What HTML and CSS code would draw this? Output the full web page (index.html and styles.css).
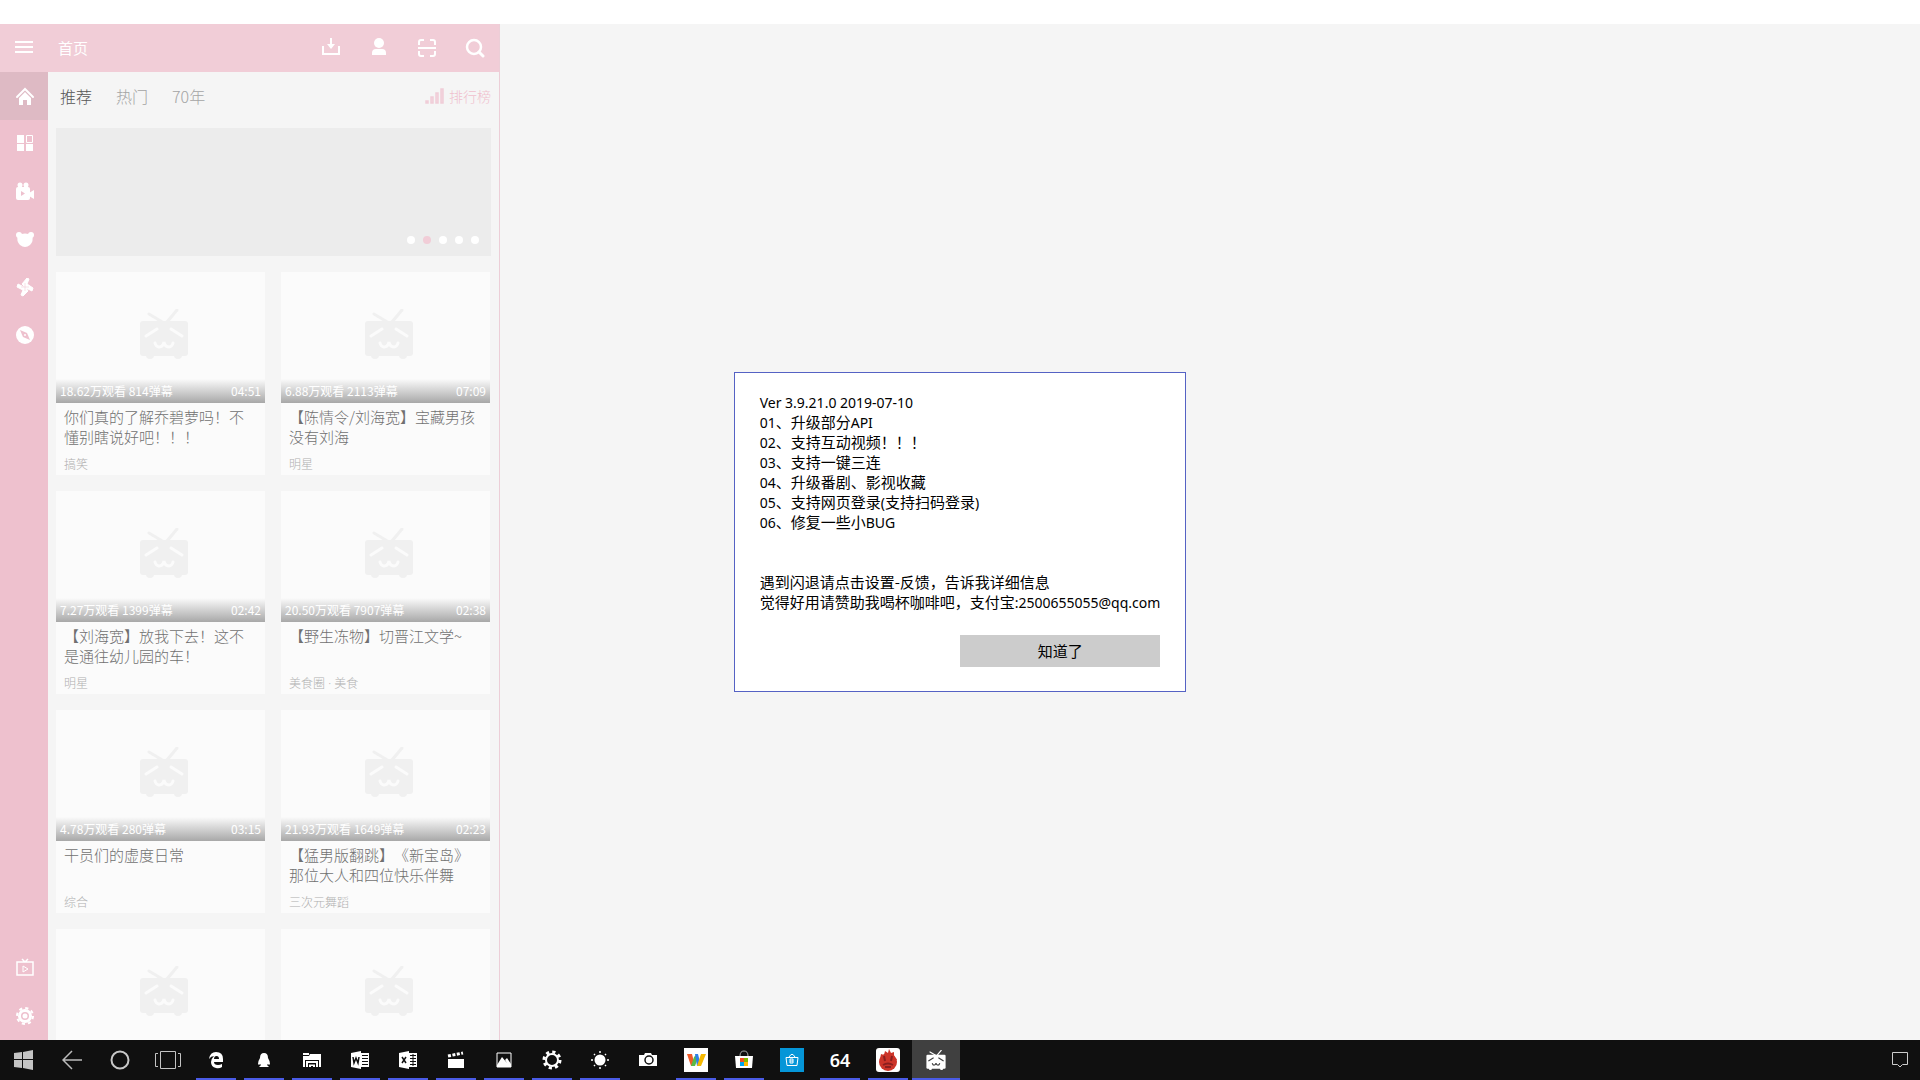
FILE: index.html
```html
<!DOCTYPE html>
<html lang="zh-CN">
<head>
  <meta charset="UTF-8">
  <meta name="viewport" content="width=device-width, initial-scale=1.0">

  <title>首页</title>

  <link rel="stylesheet" href="styles.css">
</head>
<body>

  <!-- shared icons -->
  <svg class="symbols" aria-hidden="true">
    <symbol id="tv" viewBox="0 0 50 50">
      <path d="M10 5 L25 14 M38 1 L28 13" fill="none" stroke="currentColor" stroke-width="3" stroke-linecap="round"/>
      <rect x="1" y="12" width="48" height="35" rx="3" fill="currentColor"/>
      <circle cx="11" cy="46" r="4" fill="currentColor"/>
      <circle cx="39" cy="46" r="4" fill="currentColor"/>
      <path class="tvFace" d="M7 27 L18 20 M32 20 L43 27 M16 34 Q17 38 20 38 Q24 38 25 33 Q26 38 30 38 Q33 38 34 34" fill="none" stroke-width="3" stroke-linecap="round"/>
    </symbol>
  </svg>

  <div class="titleBar"></div>

  <div class="app">
    <div class="panel">
      <header class="header">
        <button class="iconButton menuButton" aria-label="菜单">
          <svg width="18" height="18" viewBox="0 0 18 18"><path d="M0 3H18M0 8H18M0 13H18" fill="none" stroke="#fff" stroke-width="2"/></svg>
        </button>
        <h1 class="headerTitle">首页</h1>
        <button class="iconButton" aria-label="下载">
          <svg width="20" height="20" viewBox="0 0 20 20"><path d="M2 8V16H18V8" fill="none" stroke="#fff" stroke-width="2"/><path d="M10 0V9" stroke="#fff" stroke-width="2"/><path d="M6 6H14L10 11Z" fill="#fff"/></svg>
        </button>
        <button class="iconButton" aria-label="用户">
          <svg width="20" height="20" viewBox="0 0 20 20"><circle cx="10" cy="5" r="5" fill="#fff"/><path d="M3 17V15Q3 11 7 11H13Q17 11 17 15V17Z" fill="#fff"/></svg>
        </button>
        <button class="iconButton" aria-label="扫码">
          <svg width="20" height="20" viewBox="0 0 20 20"><path d="M2 7V4Q2 2 4 2H7M13 2H16Q18 2 18 4V7M2 13V16Q2 18 4 18H7M13 18H16Q18 18 18 16V13M1 10H19" fill="none" stroke="#fff" stroke-width="2"/></svg>
        </button>
        <button class="iconButton" aria-label="搜索">
          <svg width="20" height="20" viewBox="0 0 20 20"><circle cx="9" cy="9" r="7" fill="none" stroke="#fff" stroke-width="2.500"/><path d="M14 14L18 18" stroke="#fff" stroke-width="3" stroke-linecap="round"/></svg>
        </button>
      </header>

      <div class="panelBody">
        <nav class="sideBar">
          <a href="#" class="sideItem sideItem-active" aria-label="首页">
            <svg width="20" height="20" viewBox="0 0 20 20"><path d="M2 11L10 3L18 11" fill="none" stroke="#fff" stroke-width="2" stroke-linecap="round"/><path d="M4 12L10 6L16 12V19H12V14H8V19H4Z" fill="#fff"/></svg>
          </a>
          <a href="#" class="sideItem" aria-label="分区">
            <svg width="20" height="20" viewBox="0 0 20 20"><path d="M2 1H9V9H2ZM2 10H9V17H2ZM11 10H18V17H11Z" fill="#fff"/><path d="M11.500 1.500H17.500V8.500H11.500Z" fill="none" stroke="#fff"/></svg>
          </a>
          <a href="#" class="sideItem" aria-label="直播">
            <svg width="20" height="20" viewBox="0 0 20 20"><circle cx="5" cy="3" r="2.500" fill="#fff"/><circle cx="11" cy="3" r="2.500" fill="#fff"/><rect x="1" y="5" width="14" height="13" rx="2" fill="#fff"/><path d="M14 11L19 8V17L14 14Z" fill="#fff"/><path d="M6 9L10 11.500L6 14Z" fill="#eec1ce"/></svg>
          </a>
          <a href="#" class="sideItem" aria-label="番剧">
            <svg width="20" height="20" viewBox="0 0 20 20"><circle cx="4" cy="5" r="3" fill="#fff"/><circle cx="16" cy="5" r="3" fill="#fff"/><path d="M3 5Q10 2 17 5Q19 11 15 15Q10 19 5 15Q1 11 3 5Z" fill="#fff"/></svg>
          </a>
          <a href="#" class="sideItem" aria-label="动态">
            <svg width="20" height="20" viewBox="0 0 20 20"><path d="M10 9L7 6L12 0L14 1L12 6L18 10L17 13L11 10L13 13L8 18L6 17L8 12L2 9L3 6L9 9Z" fill="#fff" stroke="#fff"/><path d="M10 5V13M6 9H14" stroke="#eec1ce" stroke-width=".5"/></svg>
          </a>
          <a href="#" class="sideItem" aria-label="发现">
            <svg width="20" height="20" viewBox="0 0 20 20"><circle cx="10" cy="9" r="9" fill="#fff"/><path d="M5 4L12 7L15 14L8 11Z" fill="#eec1ce"/><circle cx="10" cy="9" r="1" fill="#fff"/></svg>
          </a>
          <a href="#" class="sideItem sideItem-bottom" aria-label="视频">
            <svg width="20" height="20" viewBox="0 0 20 20"><path d="M2 4H18V17H2ZM7 1L10 4L13 1" fill="none" stroke="#fff" stroke-width="1.500"/><path d="M8 8L13 11L8 14Z" fill="none" stroke="#fff"/></svg>
          </a>
          <a href="#" class="sideItem" aria-label="设置">
            <svg width="20" height="20" viewBox="0 0 20 20"><circle cx="10" cy="10" r="8" fill="none" stroke="#fff" stroke-width="2" stroke-dasharray="3.200 3.080"/><circle cx="10" cy="10" r="5.500" fill="none" stroke="#fff" stroke-width="3"/><circle cx="10" cy="10" r="2.500" fill="#fff"/></svg>
          </a>
        </nav>

        <main class="content">
          <div class="tabs">
            <a href="#" class="tab tab-active">推荐</a>
            <a href="#" class="tab">热门</a>
            <a href="#" class="tab">70年</a>
            <a href="#" class="ranking">
              <svg width="20" height="16" viewBox="0 0 20 16"><path d="M1 13H3V15H1ZM6 9H8V15H6ZM11 5H13V15H11ZM16 1H18V15H16Z" fill="#f5dbe2" stroke="#f0cdd7" stroke-width="1.500"/></svg>
              排行榜
            </a>
          </div>

          <div class="banner">
            <i class="dot"></i>
            <i class="dot dot-active"></i>
            <i class="dot"></i>
            <i class="dot"></i>
            <i class="dot"></i>
          </div>

          <div class="cards">
            <a href="#" class="card">
              <div class="cover">
                <svg class="coverIcon"><use href="#tv"/></svg>
                <div class="coverInfo"><span>18.62万观看 814弹幕</span><span>04:51</span></div>
              </div>
              <h2 class="cardTitle">你们真的了解乔碧萝吗！不懂别瞎说好吧！！！</h2>
              <p class="cardType">搞笑</p>
            </a>
            <a href="#" class="card">
              <div class="cover">
                <svg class="coverIcon"><use href="#tv"/></svg>
                <div class="coverInfo"><span>6.88万观看 2113弹幕</span><span>07:09</span></div>
              </div>
              <h2 class="cardTitle">【陈情令/刘海宽】宝藏男孩没有刘海</h2>
              <p class="cardType">明星</p>
            </a>
            <a href="#" class="card">
              <div class="cover">
                <svg class="coverIcon"><use href="#tv"/></svg>
                <div class="coverInfo"><span>7.27万观看 1399弹幕</span><span>02:42</span></div>
              </div>
              <h2 class="cardTitle">【刘海宽】放我下去！这不是通往幼儿园的车！</h2>
              <p class="cardType">明星</p>
            </a>
            <a href="#" class="card">
              <div class="cover">
                <svg class="coverIcon"><use href="#tv"/></svg>
                <div class="coverInfo"><span>20.50万观看 7907弹幕</span><span>02:38</span></div>
              </div>
              <h2 class="cardTitle">【野生冻物】切晋江文学~</h2>
              <p class="cardType">美食圈<span class="separator"> · </span>美食</p>
            </a>
            <a href="#" class="card">
              <div class="cover">
                <svg class="coverIcon"><use href="#tv"/></svg>
                <div class="coverInfo"><span>4.78万观看 280弹幕</span><span>03:15</span></div>
              </div>
              <h2 class="cardTitle">干员们的虚度日常</h2>
              <p class="cardType">综合</p>
            </a>
            <a href="#" class="card">
              <div class="cover">
                <svg class="coverIcon"><use href="#tv"/></svg>
                <div class="coverInfo"><span>21.93万观看 1649弹幕</span><span>02:23</span></div>
              </div>
              <h2 class="cardTitle">【猛男版翻跳】《新宝岛》那位大人和四位快乐伴舞</h2>
              <p class="cardType">三次元舞蹈</p>
            </a>
            <a href="#" class="card" aria-label="视频">
              <div class="cover"><svg class="coverIcon"><use href="#tv"/></svg></div>
            </a>
            <a href="#" class="card" aria-label="视频">
              <div class="cover"><svg class="coverIcon"><use href="#tv"/></svg></div>
            </a>
          </div>
        </main>
      </div>
    </div>

    <!-- update notes -->
    <div class="overlay">
      <div class="dialog" role="dialog">
        <div class="dialogText">
          <p><span class="latin">Ver 3.9.21.0 2019-07-10</span></p>
          <p><span class="latin">01</span>、升级部分<span class="latin">API</span></p>
          <p><span class="latin">02</span>、支持互动视频！！！</p>
          <p><span class="latin">03</span>、支持一键三连</p>
          <p><span class="latin">04</span>、升级番剧、影视收藏</p>
          <p><span class="latin">05</span>、支持网页登录<span class="latin">(</span>支持扫码登录<span class="latin">)</span></p>
          <p><span class="latin">06</span>、修复一些小<span class="latin">BUG</span></p>
          <br>
          <br>
          <p>遇到闪退请点击设置-反馈，告诉我详细信息</p>
          <p>觉得好用请赞助我喝杯咖啡吧，支付宝<span class="latin">:2500655055@qq.com</span></p>
        </div>
        <button class="dialogButton">知道了</button>
      </div>
    </div>
  </div>

  <footer class="taskBar">
    <button class="task" aria-label="开始">
      <svg width="20" height="20" viewBox="0 0 20 20"><path d="M0 3L8 2V9H0ZM9 2L19 0V9H9ZM0 10H8V18L0 17ZM9 10H19V20L9 18Z" fill="#c4c4c4"/></svg>
    </button>
    <button class="task" aria-label="返回">
      <svg width="20" height="20" viewBox="0 0 20 20"><path d="M20 10H1M10 1L1 10L10 19" fill="none" stroke="#bbb" stroke-width="1.500"/></svg>
    </button>
    <button class="task" aria-label="Cortana">
      <svg width="20" height="20" viewBox="0 0 20 20"><circle cx="10" cy="10" r="8.500" fill="none" stroke="#c8c8c8" stroke-width="2"/></svg>
    </button>
    <button class="task" aria-label="任务视图">
      <svg width="28" height="20" viewBox="0 0 28 20"><path d="M6.500 1.500H21.500V18.500H6.500ZM4 3.500H1.500V16.500H4M24 3.500H26.500V16.500H24" fill="none" stroke="#c4c4c4"/></svg>
    </button>
    <button class="task task-open" aria-label="Edge">
      <svg width="20" height="20" viewBox="0 0 20 20"><path d="M3 9Q4 2 10 2Q17 2 17 9V12H8Q8 15 12 15Q14 15 16 14V17Q13 19 10 18Q5 17 5 12Q5 9 8 6Q5 6 3 9Z" fill="#fff"/><path d="M8 9Q8 6 10.500 6Q13 6 13 9Z" fill="#101010"/></svg>
    </button>
    <button class="task task-open" aria-label="QQ">
      <svg width="20" height="20" viewBox="0 0 20 20"><path d="M10 3Q14 3 14 8Q16 11 16 14L15 15L14 14L13 15L15 17H5L7 15L6 14L5 15L4 14Q4 11 6 8Q6 3 10 3Z" fill="#fff"/></svg>
    </button>
    <button class="task task-open" aria-label="文件">
      <svg width="20" height="20" viewBox="0 0 20 20"><path d="M1 3H7V5H1ZM8 4H19V17H17V10H3V17H1V6H7Z" fill="#fff"/><path d="M4 17V11H16V17H14V13H6V17Z" fill="#fff"/><path d="M7 17V14.500H13V17H11V16H9V17Z" fill="#fff"/></svg>
    </button>
    <button class="task task-open" aria-label="Word">
      <svg width="20" height="20" viewBox="0 0 20 20"><path d="M1 3L11 1V19L1 17ZM11 3H19V17H11Z" fill="#fff"/><path d="M12 5.500H18M12 8.500H18M12 11.500H18M12 14.500H18" stroke="#101010"/><path d="M3 7L4 13L6 8L8 13L9 7" fill="none" stroke="#101010" stroke-width="1.500"/></svg>
    </button>
    <button class="task task-open" aria-label="Excel">
      <svg width="20" height="20" viewBox="0 0 20 20"><path d="M1 3L11 1V19L1 17ZM11 3H19V17H11Z" fill="#fff"/><path d="M12 5.500H18M12 8.500H18M12 11.500H18M12 14.500H18M15 4V16" stroke="#101010"/><path d="M4 7L8 13M8 7L4 13" fill="none" stroke="#101010" stroke-width="1.500"/></svg>
    </button>
    <button class="task task-open" aria-label="电影">
      <svg width="20" height="20" viewBox="0 0 20 20"><path d="M2 9H18V18H2Z" fill="#fff"/><path d="M2 6L17 3" stroke="#fff" stroke-width="3" stroke-dasharray="3 1.500"/></svg>
    </button>
    <button class="task task-open" aria-label="照片">
      <svg width="20" height="20" viewBox="0 0 20 20"><path d="M3 3H17V17H3Z" fill="none" stroke="#fff"/><path d="M3 15L8 7L13 13L11 10L13 8L17 14V17H3Z" fill="#fff"/></svg>
    </button>
    <button class="task task-open" aria-label="设置">
      <svg width="20" height="20" viewBox="0 0 20 20"><circle cx="10" cy="10" r="8" fill="none" stroke="#fff" stroke-width="3" stroke-dasharray="3.200 3.080"/><circle cx="10" cy="10" r="6" fill="none" stroke="#fff" stroke-width="2"/></svg>
    </button>
    <button class="task task-open" aria-label="亮度">
      <svg width="20" height="20" viewBox="0 0 20 20"><circle cx="10" cy="10" r="5.500" fill="#fff"/><path d="M10 1V3M10 17V19M1 10H3M17 10H19M4 4L5 5M15 15L16 16M4 16L5 15M15 5L16 4" stroke="#fff" stroke-width="1.500"/></svg>
    </button>
    <button class="task" aria-label="相机">
      <svg width="20" height="20" viewBox="0 0 20 20"><path d="M1 5H6L7 3H13L14 5H19V16H1Z" fill="#fff"/><circle cx="11" cy="10" r="4" fill="none" stroke="#101010" stroke-width="1.500"/></svg>
    </button>
    <button class="task task-open" aria-label="W">
      <svg width="24" height="24" viewBox="0 0 24 24"><rect width="24" height="24" fill="#fff"/><path d="M3 6H8L11 18H7Z" fill="#f05a28"/><path d="M7 18L10 9L13 6L14 10L11 18Z" fill="#59b947"/><path d="M11 6H14L17 18H13Z" fill="#2f80e8"/><path d="M13 18L17 6H22L17 18Z" fill="#f5b800"/></svg>
    </button>
    <button class="task task-open" aria-label="应用商店">
      <svg width="20" height="20" viewBox="0 0 20 20"><path d="M6 6Q6 1 10 1Q14 1 14 6" fill="none" stroke="#aaa"/><path d="M1 6H19L18 18H2Z" fill="#fff"/><path d="M6 8H10V12H6Z" fill="#f25022"/><path d="M10 8H14V12H10Z" fill="#7fba00"/><path d="M6 12H10V16H6Z" fill="#00a4ef"/><path d="M10 12H14V16H10Z" fill="#ffb900"/></svg>
    </button>
    <button class="task" aria-label="商店">
      <svg width="24" height="24" viewBox="0 0 24 24"><rect width="24" height="24" fill="#0596d8"/><path d="M6 9.500H18L17 17.500H7ZM9 9L11 6.500H13L15 9" fill="none" stroke="#fff"/><path d="M10 11H13V15H10ZM10 13H13" fill="none" stroke="#fff"/></svg>
    </button>
    <button class="task task-open taskText">64</button>
    <button class="task task-open" aria-label="安兔兔">
      <svg width="24" height="24" viewBox="0 0 24 24"><rect width="24" height="24" rx="3" fill="#fff"/><circle cx="12" cy="14" r="9" fill="#cc3429"/><path d="M4 11L5 6L8 7L9 3L12 5L13 1L15 5L18 4L18 8L21 12Z" fill="#cc3429"/><path d="M8 8L9 13M16 8L15 13M7 17Q12 14 17 17M9 19H15" fill="none" stroke="#8a1f1f" stroke-width="2"/></svg>
    </button>
    <button class="task task-open task-active" aria-label="哔哩哔哩">
      <svg class="taskTv" width="20" height="20"><use href="#tv"/></svg>
    </button>
    <button class="task taskNotice" aria-label="通知">
      <svg width="18" height="18" viewBox="0 0 18 18"><path d="M1.500 1.500H16.500V13.500H11.500L9 16L6.500 13.500H1.500Z" fill="none" stroke="#ccc"/></svg>
    </button>
  </footer>

</body>
</html>
```
FILE: styles.css
```css
* {
  box-sizing: border-box;
}
body {
  display: flex;
  flex-direction: column;
  height: 100vh;
  margin: 0;
  overflow: hidden;
  font-family: "Noto Sans CJK SC", sans-serif;
  font-size: 15px;
  line-height: 20px;
  text-spacing-trim: space-all;
  background-color: #fff;
}
h1, h2, p {
  margin: 0;
  font-size: 15px;
  font-weight: inherit;
}
a {
  color: inherit;
  text-decoration: none;
}
button {
  border: 0;
  padding: 0;
  background: none;
  font: inherit;
}
svg {
  display: block;
}
.symbols {
  position: absolute;
  width: 0;
  height: 0;
}
.latin {
  font-family: "Noto Sans", sans-serif;
  font-size: 14px;
}
.titleBar {
  height: 24px;
}
.app {
  position: relative;
  display: flex;
  flex: 1;
  min-height: 0;
  background-color: #f5f5f5;
}

/* left panel */
.panel {
  display: flex;
  flex-direction: column;
  width: 500px;
  border-right: 1px solid #ecced7;
}
.header {
  display: flex;
  flex: none;
  align-items: center;
  height: 48px;
  background-color: #f1cdd7;
}
.iconButton {
  display: flex;
  align-items: center;
  justify-content: center;
  width: 48px;
  height: 48px;
}
.menuButton {
  height: 44px;
}
.headerTitle {
  flex: 1;
  padding-left: 10px;
  color: #fff;
}
.panelBody {
  display: flex;
  flex: 1;
  min-height: 0;
}
.sideBar {
  display: flex;
  flex: none;
  flex-direction: column;
  width: 48px;
  background-color: #eec1ce;
}
.sideItem {
  display: flex;
  align-items: center;
  justify-content: center;
  height: 48px;
  padding-left: 2px;
}
.sideItem-active {
  background-color: #debac4;
}
.sideItem-bottom {
  margin-top: auto;
}
.content {
  flex: 1;
  padding: 0 8px;
  overflow: hidden;
}
.tabs {
  display: flex;
  align-items: center;
  gap: 24px;
  height: 56px;
  padding: 0 0 8px 4px;
  font-weight: 300;
}
.tab {
  color: #a4a4a4;
  font-size: 16px;
}
.tab-active {
  color: #555;
}
.ranking {
  display: flex;
  align-items: center;
  gap: 4px;
  margin-left: auto;
  color: #f0c0cd;
  font-size: 14px;
}
.banner {
  display: flex;
  align-items: flex-end;
  justify-content: flex-end;
  gap: 8px;
  height: 128px;
  padding: 12px;
  background-color: #ececec;
}
.dot {
  width: 8px;
  height: 8px;
  border-radius: 50%;
  background-color: #fff;
}
.dot-active {
  background-color: #f1cdd7;
}

/* video cards */
.cards {
  display: grid;
  grid-template-columns: 1fr 1fr;
  gap: 16px;
  padding: 16px 1px 0 0;
}
.card {
  display: flex;
  flex-direction: column;
  height: 203px;
  background-color: #fbfbfb;
}
.cover {
  display: flex;
  flex-direction: column;
  align-items: center;
  height: 131px;
  padding-top: 37px;
}
.coverIcon {
  width: 50px;
  height: 50px;
  margin-left: 6px;
  color: #f0f0f0;
}
.tvFace {
  stroke: var(--face, #fbfbfb);
}
.coverInfo {
  display: flex;
  align-self: stretch;
  justify-content: space-between;
  height: 24px;
  margin-top: auto;
  padding: 2px 4px;
  background: linear-gradient(#fbfbfb, #a8a8a8);
  color: #fff;
  font-size: 12px;
}
.cardTitle {
  height: 40px;
  margin: 4px 8px 0;
  color: #707070;
  font-weight: 300;
}
.cardType {
  margin: 7px 8px 0;
  color: #b0b0b0;
  font-size: 12px;
  font-weight: 300;
}
.separator {
  font-family: "Noto Sans", sans-serif;
}

/* dialog */
.overlay {
  position: absolute;
  inset: 0;
  display: flex;
  align-items: center;
  justify-content: center;
}
.dialog {
  display: flex;
  flex-direction: column;
  align-items: flex-end;
  gap: 23px;
  padding: 19px 25px 24px;
  border: 1px solid #5562c4;
  background-color: #fff;
}
.dialogText {
  align-self: stretch;
  color: #000;
}
.dialogText p {
  height: 20px;
}
.dialogButton {
  width: 200px;
  height: 32px;
  background-color: #ccc;
  color: #000;
}

/* task bar */
.taskBar {
  display: flex;
  flex: none;
  height: 40px;
  background-color: #101010;
}
.task {
  display: flex;
  align-items: center;
  justify-content: center;
  width: 48px;
  height: 40px;
  color: #fff;
}
.task-open {
  background: linear-gradient(#4a5be6, #4a5be6) center bottom / 40px 2px no-repeat;
}
.task-active {
  background-color: #404040;
  background-size: 48px 2px;
}
.taskText {
  font-family: "Noto Sans", sans-serif;
  font-size: 18px;
  font-weight: 600;
}
.taskTv {
  --face: #404040;
}
.taskNotice {
  width: 40px;
  margin-left: auto;
}
```
